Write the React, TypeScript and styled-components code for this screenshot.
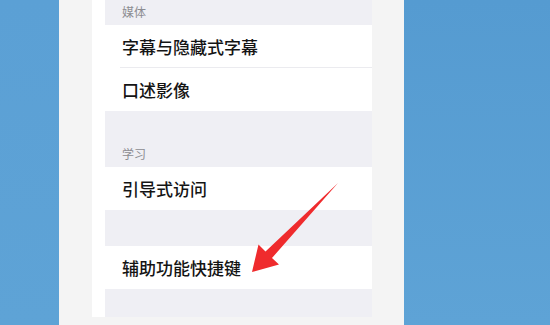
import styled, { createGlobalStyle } from 'styled-components';

const GlobalStyle = createGlobalStyle`
  html, body {
    margin: 0;
    padding: 0;
    overflow: hidden;
  }
  body {
    font-family: "Noto Sans CJK SC", "Noto Sans", sans-serif;
  }
`;

type Item = { label: string };
type Group = { title?: string; gap: number; items: Item[] };

const groups: Group[] = [
  { title: '媒体', gap: 25, items: [{ label: '字幕与隐藏式字幕' }, { label: '口述影像' }] },
  { title: '学习', gap: 56, items: [{ label: '引导式访问' }] },
  { gap: 36, items: [{ label: '辅助功能快捷键' }] },
];

const App = () => {
  return (
    <Page>
      <GlobalStyle />
      <SideBlue $width={59} $tone="#5ba0d5" />
      <Frame>
        <Screen>
          {groups.map((group, gi) => (
            <section key={gi}>
              <GroupHeader $height={group.gap}>
                {group.title && <span>{group.title}</span>}
              </GroupHeader>
              <RowList>
                {group.items.map((item) => (
                  <Row key={item.label}>{item.label}</Row>
                ))}
              </RowList>
            </section>
          ))}
          <BottomFill />
          <Pointer viewBox="0 0 550 325" width="550" height="325">
            <polygon
              points="252,272 258.5,244.5 265.5,251.5 338,183 272,258 279,264.5"
              fill="#ef2b2d"
            />
          </Pointer>
        </Screen>
      </Frame>
      <SideBlue $tone="#559bd1" />
    </Page>
  );
};

const Page = styled.div`
  position: relative;
  width: 550px;
  height: 325px;
  display: flex;
  flex-direction: row;
  background: #579dd2;
`;

const SideBlue = styled.div<{ $width?: number; $tone: string }>`
  flex: ${(p) => (p.$width ? `0 0 ${p.$width}px` : '1 1 auto')};
  height: 100%;
  background: linear-gradient(180deg, ${(p) => p.$tone} 0%, #5ea3d6 100%);
`;

const Frame = styled.div`
  flex: 0 0 345px;
  height: 100%;
  box-sizing: border-box;
  padding: 0 32px 0 33px;
  background: #f4f4f4;
`;

const Screen = styled.div`
  width: 280px;
  height: 317px;
  box-sizing: border-box;
  padding-left: 13px;
  background: #ffffff;
  display: flex;
  flex-direction: column;
  overflow: visible;
`;

const GroupHeader = styled.div<{ $height: number }>`
  height: ${(p) => p.$height}px;
  background: #efeff4;
  display: flex;
  align-items: flex-end;
  padding-left: 17px;
  box-sizing: border-box;
  span {
    font-size: 12px;
    line-height: 12px;
    color: #8c8c91;
    padding-bottom: 7px;
  }
`;

const RowList = styled.div`
  display: flex;
  flex-direction: column;
  background: #ffffff;
`;

const Row = styled.div`
  position: relative;
  height: 43px;
  display: flex;
  align-items: center;
  padding-left: 17px;
  font-size: 17px;
  font-weight: 500;
  color: #141414;
  &:not(:last-child)::after {
    content: '';
    position: absolute;
    left: 15px;
    right: 0;
    bottom: 0;
    height: 1px;
    background: #ebebef;
  }
`;

const BottomFill = styled.div`
  flex: 1 1 auto;
  background: #efeff4;
`;

const Pointer = styled.svg`
  position: absolute;
  left: 0;
  top: 0;
  pointer-events: none;
`;

export default App;
